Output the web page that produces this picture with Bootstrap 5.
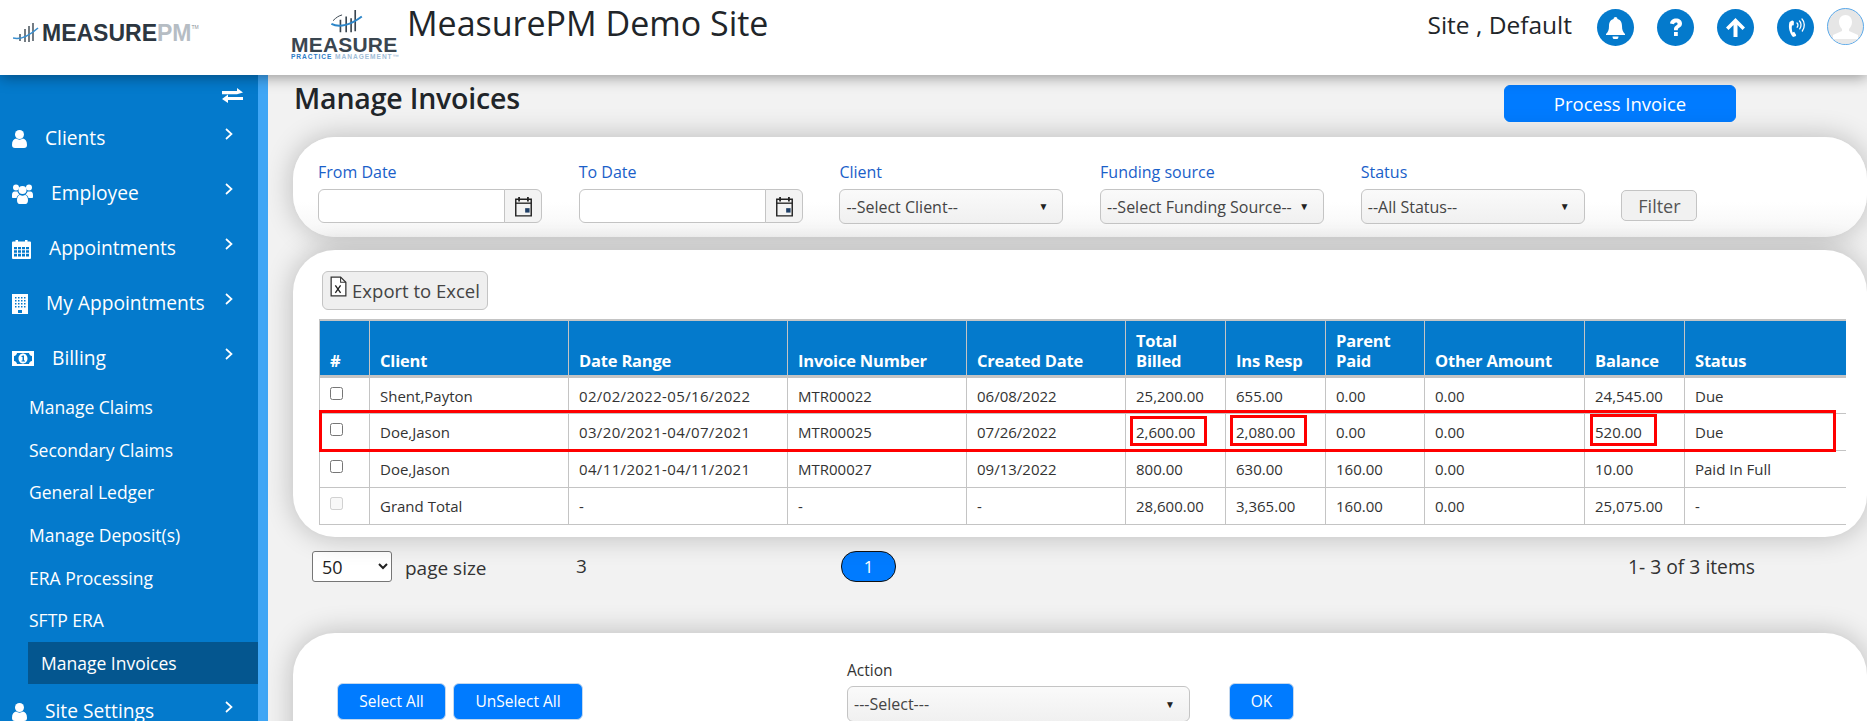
<!DOCTYPE html>
<html lang="en">
<head>
<meta charset="utf-8">
<title>Manage Invoices</title>
<link rel="stylesheet" href="https://cdn.jsdelivr.net/npm/bootstrap@5.3.0/dist/css/bootstrap.min.css">
<style>
html,body{height:721px;overflow:hidden}
body{font-family:"Open Sans","Noto Sans",sans-serif;font-size:15px;color:#212529;background:#f2f2f2}
.mp-top{height:75px;background:#fff;box-shadow:0 2px 14px rgba(0,0,0,.4);position:relative;z-index:5;flex:none}
.mp-logo1{width:268px;padding:23px 0 0 13px;flex:none;font-family:"Liberation Sans",sans-serif;font-weight:700;font-size:23px;line-height:20px;color:#2c3640}
.mp-logo1 svg{margin-right:3px}
.mp-logo1 i{font-style:normal;color:#b6bdc4}
.mp-logo1 sup{font-size:5px;color:#8a9199;top:-12px;font-weight:400}
.mp-logo2{width:139px;padding:0 0 0 23px;flex:none;font-family:"Liberation Sans",sans-serif;line-height:1}
.mp-logo2 svg{display:block;margin:10px 0 0 37px}
.mp-logo2 b{display:block;color:#3a4650;font-size:21px;letter-spacing:.2px;margin-top:4px;line-height:16px}
.mp-logo2 small{display:block;font-size:6.6px;letter-spacing:.95px;font-weight:700;color:#9fbdd8;white-space:nowrap;margin-top:1px}
.mp-logo2 small em{font-style:normal;color:#2d7cc7}
.mp-sitetitle{font-size:34px;font-weight:400;line-height:47px;margin:0}
.mp-user{font-size:24.5px;line-height:50px;margin-right:25px}
.mp-round{width:37px;height:37px;border-radius:50%;background:#047acc;margin-right:23px;margin-top:9px;flex:none}
.mp-avatar{width:37px;height:37px;border-radius:50%;background:#e6e6e6;border:1px solid #5aa9ea;margin:8px 3px 0 -10px;flex:none;overflow:hidden}
.mp-shell{flex:1 1 auto;min-height:0}
.mp-side{width:268px;flex:none;background:#047acc;border-right:10px solid #3fa6f5;color:#fff}
.mp-toggle{height:36px;padding:13px 15px 0 0}
.mp-item{height:55px;padding-left:12px;gap:18px;font-size:19.2px}
.mp-item .mp-chev{margin:0 25px 10px auto}
.mp-sub{height:42.6px;padding:0 0 0 29px;font-size:17.5px}
.mp-sub.mp-on{margin-left:28px;padding-left:13px;background:#04568f}
.mp-main{flex:1 1 auto;min-width:0}
.mp-head{height:62px;margin-left:26px;padding-right:131px}
.mp-h{font-size:28.5px;font-weight:600;margin:5px 0 0;line-height:36px;letter-spacing:-.2px}
.mp-process{width:232px;height:37px;margin-top:10px;font-size:18.5px;padding:0}
.btn-primary{background:#007bff;border-color:#007bff}
.mp-panel{margin-left:25px;background:#fff;border-radius:42px;box-shadow:0 0 28px rgba(0,0,0,.24);position:relative}
.mp-filter{height:100px;margin-bottom:13px;padding:25px 0 0 25px;gap:36.7px;background:linear-gradient(#fff 65%,#f5f5f5)}
.mp-fcol{width:224px;flex:none}
.mp-fcol label{display:block;color:#1a60c9;font-size:16px;line-height:20px;margin-bottom:7px;font-weight:500}
.mp-fcol .form-control{height:34px;border-color:#c4c4c4;border-radius:6px 0 0 6px;background:#fff;padding:0 8px}
.mp-fcol .input-group-text{width:38px;border-color:#c4c4c4;border-radius:0 6px 6px 0;background:#f3f3f3;padding:0 0 0 9px}
.mp-dd{height:35px;border:1px solid #c4c4c4;border-radius:6px;background:linear-gradient(#fafafa,#f0f0f0);padding:0 6px;font-size:16px;color:#444;white-space:nowrap}
.mp-dd span:last-child{font-size:10px;color:#222;padding-right:8px}
.mp-filterbtn{height:31px;width:76px;margin-top:28px;border:1px solid #c4c4c4;border-radius:5px;background:#f1f1f1;color:#555;font-size:18px;padding:0;flex:none;line-height:1}
.mp-tablewrap{height:287px;padding:21px 22px 0 26px}
.mp-export{height:39px;width:166px;margin:0 0 9px 3px;border:1px solid #c4c4c4;border-radius:6px;background:#efefef;color:#444;font-size:18.5px;padding:0;gap:5px}
.mp-export svg{margin-top:-8px}
.mp-table{table-layout:fixed;width:1526px;margin:0;border-color:#c4c4c4;font-size:15px}
.mp-c0{width:50px}.mp-c1{width:199px}.mp-c2{width:219px}.mp-c3{width:179px}.mp-c4{width:159px}.mp-c5{width:100px}.mp-c6{width:100px}.mp-c7{width:99px}.mp-c8{width:160px}.mp-c9{width:100px}.mp-c10{width:161px}
.mp-table th{background:#047acc;color:#fff;font-size:16.5px;font-weight:700;line-height:20px;height:56px;padding:0 10px 4px;vertical-align:bottom;border-top:2px solid #c4c4c4;border-bottom:3px solid #c4c4c4;letter-spacing:-.2px;--bs-table-bg:#047acc;--bs-table-color:#fff}
.mp-table td{height:37px;padding:8px 10px 0;vertical-align:top;line-height:20px;color:#333;white-space:nowrap}
.mp-table td:first-child{padding-top:9px}
.mp-table td:nth-child(3){letter-spacing:.35px}
.mp-table tr>*:last-child{border-right:0}
.mp-table input{display:block;margin:0;position:static}
.mp-pager{height:96px;padding:14px 112px 0 44px;font-size:19px;color:#333}
.mp-size{width:80px;height:31px;border:1px solid #767676;border-radius:3px;background:#fff;font-family:inherit;font-size:18px;padding:0 0 0 5px;color:#222}
.mp-ps{width:171px;margin-left:13px;line-height:34px}
.mp-n{width:265px;line-height:30px}
.mp-pill{width:55px;height:31px;border:1px solid #111;border-radius:15px;background:#007bff;color:#fff;line-height:30px;font-size:17px}
.mp-count{line-height:32px;font-size:19.3px}
.mp-bottom{height:200px;padding:28px 0 0 44px}
.mp-bottom .btn{height:37px;padding:0;font-size:15.5px;margin-top:22px;border-color:#c4d8ee}
.mp-w1{width:109px}.mp-w2{width:130px;margin-left:7px}.mp-w3{width:65px;margin-left:39px}
.mp-action{width:343px;margin-left:264px}
.mp-action label{display:block;font-size:15.5px;line-height:18px;margin-bottom:7px;color:#333}
.mp-action .mp-dd{height:36px}
.mp-mark{position:absolute;border:3px solid #f00;pointer-events:none}
.mp-m0{left:26px;top:160px;width:1517px;height:42px}
.mp-m1{left:837px;top:166px;width:77px;height:30px}
.mp-m2{left:937px;top:165px;width:77px;height:31px}
.mp-m3{left:1297px;top:164px;width:67px;height:32px}
</style>
</head>
<body class="d-flex flex-column">
<header class="mp-top d-flex">
  <div class="mp-logo1 d-flex align-items-start">
    <svg width="26" height="20" viewBox="0 0 26 20" fill="none"><g stroke="#3a4650" stroke-width="1.4"><path d="M7 11v7M12 6v13M16 3v16M20 0v18"/></g><path d="M0 15C8 17 16 13 25 5" stroke="#3a8fcf" stroke-width="1.6"/></svg>
    <span>MEASURE<i>PM</i><sup>TM</sup></span>
  </div>
  <div class="mp-logo2">
    <svg width="38" height="23" viewBox="0 0 38 28" fill="none"><g stroke="#3a4650" stroke-width="2"><path d="M11 12v15M18 8v19M24 10v17M29 0v26"/></g><path d="M0 17C10 22 24 18 37 8" stroke="#2d86c9" stroke-width="2.400"/><path d="M2 13C6 9 9 7 13 6" stroke="#3a4650" stroke-width="1.200"/></svg>
    <b>MEASURE</b>
    <small><em>PRACTICE</em> MANAGEMENT&trade;</small>
  </div>
  <h1 class="mp-sitetitle">MeasurePM Demo Site</h1>
  <div class="ms-auto d-flex align-items-start">
    <span class="mp-user">Site , Default</span>
    <span class="mp-round d-flex align-items-center justify-content-center"><svg width="21" height="23" viewBox="0 0 21 23" fill="#fff"><path d="M10.500 1a2 2 0 0 1 2 2c3.500 1 4.500 4 4.500 7 0 4 1 6 3 8v1H1v-1c2-2 3-4 3-8 0-3 1-6 4.500-7a2 2 0 0 1 2-2zM7.500 20.500h6a3 3 0 0 1-6 0z"/></svg></span>
    <span class="mp-round d-flex align-items-center justify-content-center"><svg width="14" height="19" viewBox="0 0 14 19" fill="#fff"><path d="M1 5.500C1.500 2 4 .5 7 .5c3.500 0 6 2 6 5 0 2.300-1.300 3.300-2.800 4.300C9 10.600 8.800 11 8.800 12.200H5v-1.100c0-1.800.8-2.800 2.200-3.700.9-.6 1.400-1 1.400-1.700 0-.8-.7-1.300-1.600-1.300-1.100 0-1.800.7-1.900 1.900zM5 14h3.800v4H5z"/></svg></span>
    <span class="mp-round d-flex align-items-center justify-content-center"><svg width="21" height="21" viewBox="0 0 21 21" fill="#fff"><path d="M10.500 1 20 10.500 17.500 13l-5-5v12h-4V8l-5 5L1 10.500z"/></svg></span>
    <span class="mp-round d-flex align-items-center justify-content-center"><svg width="24" height="24" viewBox="0 0 24 24" fill="none"><path d="M8 4.500 5.500 6C4 11 5.500 17 9 21l2.500-.8c.8-.4.8-1 .4-1.600l-1.700-2.800-1.700.6C7.800 14 7.500 11.500 8 9.500l1.700-.2.200-3.300c0-.9-.8-1.700-1.900-1.500z" fill="#fff"/><path d="M13 7c1.200 1 1.200 3 .2 4.200M15.500 5c2 1.800 2 5.500.2 7.800M18 3c3 3 3 8.500.3 12" stroke="#fff" stroke-width="1.300" stroke-linecap="round"/></svg></span>
    <span class="mp-avatar d-block"><svg width="35" height="35" viewBox="0 0 35 35"><path d="M17.500 6c4 0 6.500 3 6.500 7 0 3-1.500 5.500-3 7v2l9 4v5H5v-5l9-4v-2c-1.500-1.500-3-4-3-7 0-4 2.500-7 6.500-7z" fill="#fff"/><path d="M0 30h35v5H0z" fill="#e9e9e9"/></svg></span>
  </div>
</header>
<div class="mp-shell d-flex">
  <nav class="mp-side">
    <div class="mp-toggle d-flex justify-content-end"><svg width="21" height="15" viewBox="0 0 21 15" fill="#fff"><path d="M0 3h15V0l6 4.500L15 6.200H0zM21 9H6V6.500L0 11l6 4v-3h15z"/></svg></div>
    <div class="mp-item d-flex align-items-center"><svg width="15" height="18" viewBox="0 0 15 18" fill="#fff"><circle cx="7.500" cy="4.500" r="4.500"/><path d="M0 15c0-4 1.500-6 4-6.500 2 1.500 5 1.500 7 0 2.500.5 4 2.500 4 6.500 0 2-1 3-3 3H3c-2 0-3-1-3-3z"/></svg><span>Clients</span><svg class="mp-chev" width="8" height="12" viewBox="0 0 8 12" fill="none"><path d="M1 1l5.500 5L1 11" stroke="#fff" stroke-width="1.700"/></svg></div>
    <div class="mp-item d-flex align-items-center"><svg width="21" height="20" viewBox="0 0 21 20" fill="#fff"><circle cx="4" cy="3.500" r="3"/><circle cx="17" cy="3.500" r="3"/><circle cx="10.500" cy="6" r="4"/><path d="M0 11c0-2 1-3.500 2.500-3.500h3c.5 1.500 1 2 2 3-1.500.5-2.500 1.500-3 3.500H1c-.7 0-1-.5-1-1zM21 11c0-2-1-3.500-2.500-3.500h-3c-.5 1.500-1 2-2 3 1.500.5 2.500 1.500 3 3.500H20c.7 0 1-.5 1-1zM5 16c0-3 1.500-5 3-5 1.500 1 3.500 1 5 0 1.500 0 3 2 3 5 0 2.500-1 4-2.500 4h-6C6 20 5 18.500 5 16z"/></svg><span>Employee</span><svg class="mp-chev" width="8" height="12" viewBox="0 0 8 12" fill="none"><path d="M1 1l5.500 5L1 11" stroke="#fff" stroke-width="1.700"/></svg></div>
    <div class="mp-item d-flex align-items-center"><svg width="19" height="20" viewBox="0 0 19 20" fill="#fff"><path fill-rule="evenodd" d="M1 2.500h2.500V1h2.500v1.500h7V1h2.500v1.500H18a1 1 0 0 1 1 1V19a1 1 0 0 1-1 1H1a1 1 0 0 1-1-1V3.500a1 1 0 0 1 1-1zM2 8v2.300h3V8zm4 0v2.300h3V8zm4 0v2.300h3V8zm4 0v2.300h3V8zM2 11.300v2.500h3v-2.500zm4 0v2.500h3v-2.500zm4 0v2.500h3v-2.500zm4 0v2.500h3v-2.500zM2 14.800v2.700h3v-2.700zm4 0v2.700h3v-2.700zm4 0v2.700h3v-2.700zm4 0v2.700h3v-2.700z"/></svg><span>Appointments</span><svg class="mp-chev" width="8" height="12" viewBox="0 0 8 12" fill="none"><path d="M1 1l5.500 5L1 11" stroke="#fff" stroke-width="1.700"/></svg></div>
    <div class="mp-item d-flex align-items-center"><svg width="16" height="20" viewBox="0 0 16 20" fill="#fff"><path fill-rule="evenodd" d="M0 0h16v20H0zM3 3v1.500h1.500V3zm3 0v1.500h1.500V3zm3 0v1.500h1.500V3zm3 0v1.500h1.500V3zM3 6v1.500h1.500V6zm3 0v1.500h1.500V6zm3 0v1.500h1.500V6zm3 0v1.500h1.500V6zM3 9v1.500h1.500V9zm3 0v1.500h1.500V9zm3 0v1.500h1.500V9zm3 0v1.500h1.500V9zM3 12v1.500h1.500V12zm3 0v1.500h1.500V12zm3 0v1.500h1.500V12zm3 0v1.500h1.500V12zM6 16v3h4v-3z"/></svg><span>My Appointments</span><svg class="mp-chev" width="8" height="12" viewBox="0 0 8 12" fill="none"><path d="M1 1l5.500 5L1 11" stroke="#fff" stroke-width="1.700"/></svg></div>
    <div class="mp-item d-flex align-items-center"><svg width="22" height="15" viewBox="0 0 22 15" fill="#fff"><path fill-rule="evenodd" d="M0 0h22v15H0zM5 2c0 1.500-1.500 3-3 3v5c1.500 0 3 1.500 3 3h12c0-1.500 1.500-3 3-3V5c-1.500 0-3-1.500-3-3zm6 .5c2.500 0 4.500 2.200 4.500 5S13.500 12.500 11 12.500 6.500 10.300 6.500 7.500 8.500 2.500 11 2.500zM9.500 5v1h1v3.500h-1v1h3.500v-1h-1V4.500h-1z"/></svg><span>Billing</span><svg class="mp-chev" width="8" height="12" viewBox="0 0 8 12" fill="none"><path d="M1 1l5.500 5L1 11" stroke="#fff" stroke-width="1.700"/></svg></div>
    <div class="mp-sub d-flex align-items-center">Manage Claims</div>
    <div class="mp-sub d-flex align-items-center">Secondary Claims</div>
    <div class="mp-sub d-flex align-items-center">General Ledger</div>
    <div class="mp-sub d-flex align-items-center">Manage Deposit(s)</div>
    <div class="mp-sub d-flex align-items-center">ERA Processing</div>
    <div class="mp-sub d-flex align-items-center">SFTP ERA</div>
    <div class="mp-sub mp-on d-flex align-items-center">Manage Invoices</div>
    <div class="mp-item d-flex align-items-center"><svg width="15" height="18" viewBox="0 0 15 18" fill="#fff"><circle cx="7.500" cy="4.500" r="4.500"/><path d="M0 15c0-4 1.500-6 4-6.500 2 1.500 5 1.500 7 0 2.500.5 4 2.500 4 6.500 0 2-1 3-3 3H3c-2 0-3-1-3-3z"/></svg><span>Site Settings</span><svg class="mp-chev" width="8" height="12" viewBox="0 0 8 12" fill="none"><path d="M1 1l5.500 5L1 11" stroke="#fff" stroke-width="1.700"/></svg></div>
  </nav>
  <main class="mp-main">
    <div class="mp-head d-flex justify-content-between align-items-start">
      <h2 class="mp-h">Manage Invoices</h2>
      <button type="button" class="btn btn-primary mp-process">Process Invoice</button>
    </div>
    <section class="mp-panel mp-filter d-flex">
      <div class="mp-fcol"><label>From Date</label>
        <div class="input-group"><input class="form-control" type="text" aria-label="From Date"><span class="input-group-text"><svg width="19" height="21" viewBox="0 0 17 19" fill="none"><path d="M1.500 3h14v15h-14z" stroke="#222" stroke-width="1.300"/><path d="M1.500 6.500h14" stroke="#222" stroke-width="1.200"/><path d="M4.500 1v4M12.500 1v4" stroke="#222" stroke-width="1.600"/><path d="M10 11h4v4h-4z" fill="#1f3f66"/></svg></span></div></div>
      <div class="mp-fcol"><label>To Date</label>
        <div class="input-group"><input class="form-control" type="text" aria-label="To Date"><span class="input-group-text"><svg width="19" height="21" viewBox="0 0 17 19" fill="none"><path d="M1.500 3h14v15h-14z" stroke="#222" stroke-width="1.300"/><path d="M1.500 6.500h14" stroke="#222" stroke-width="1.200"/><path d="M4.500 1v4M12.500 1v4" stroke="#222" stroke-width="1.600"/><path d="M10 11h4v4h-4z" fill="#1f3f66"/></svg></span></div></div>
      <div class="mp-fcol"><label>Client</label><div class="mp-dd d-flex align-items-center justify-content-between"><span>--Select Client--</span><span>&#9660;</span></div></div>
      <div class="mp-fcol"><label>Funding source</label><div class="mp-dd d-flex align-items-center justify-content-between"><span>--Select Funding Source--</span><span>&#9660;</span></div></div>
      <div class="mp-fcol"><label>Status</label><div class="mp-dd d-flex align-items-center justify-content-between"><span>--All Status--</span><span>&#9660;</span></div></div>
      <button type="button" class="mp-filterbtn">Filter</button>
    </section>
    <section class="mp-panel mp-tablewrap">
      <button type="button" class="mp-export d-flex align-items-center justify-content-center"><svg width="17" height="21" viewBox="0 0 16 20" fill="none"><path d="M1 1h9l5 5v13H1z" stroke="#333" stroke-width="1.200" fill="#fff"/><path d="M10 1v5h5" stroke="#333"/><path d="M5 9l5 7M10 9l-5 7" stroke="#222" stroke-width="1.300"/></svg><span>Export to Excel</span></button>
      <table class="table table-bordered mp-table">
        <colgroup><col class="mp-c0"><col class="mp-c1"><col class="mp-c2"><col class="mp-c3"><col class="mp-c4"><col class="mp-c5"><col class="mp-c6"><col class="mp-c7"><col class="mp-c8"><col class="mp-c9"><col class="mp-c10"></colgroup>
        <thead><tr><th>#</th><th>Client</th><th>Date Range</th><th>Invoice Number</th><th>Created Date</th><th>Total<br>Billed</th><th>Ins Resp</th><th>Parent<br>Paid</th><th>Other Amount</th><th>Balance</th><th>Status</th></tr></thead>
        <tbody>
          <tr><td><input type="checkbox" aria-label="Select"></td><td>Shent,Payton</td><td>02/02/2022-05/16/2022</td><td>MTR00022</td><td>06/08/2022</td><td>25,200.00</td><td>655.00</td><td>0.00</td><td>0.00</td><td>24,545.00</td><td>Due</td></tr>
          <tr><td><input type="checkbox" aria-label="Select"></td><td>Doe,Jason</td><td>03/20/2021-04/07/2021</td><td>MTR00025</td><td>07/26/2022</td><td>2,600.00</td><td>2,080.00</td><td>0.00</td><td>0.00</td><td>520.00</td><td>Due</td></tr>
          <tr><td><input type="checkbox" aria-label="Select"></td><td>Doe,Jason</td><td>04/11/2021-04/11/2021</td><td>MTR00027</td><td>09/13/2022</td><td>800.00</td><td>630.00</td><td>160.00</td><td>0.00</td><td>10.00</td><td>Paid In Full</td></tr>
          <tr><td><input type="checkbox" disabled aria-label="Select"></td><td>Grand Total</td><td>-</td><td>-</td><td>-</td><td>28,600.00</td><td>3,365.00</td><td>160.00</td><td>0.00</td><td>25,075.00</td><td>-</td></tr>
        </tbody>
      </table>
      <div class="mp-mark mp-m0"></div><div class="mp-mark mp-m1"></div><div class="mp-mark mp-m2"></div><div class="mp-mark mp-m3"></div>
    </section>
    <div class="mp-pager d-flex align-items-start">
      <select class="mp-size" aria-label="page size"><option>50</option></select>
      <span class="mp-ps">page size</span>
      <span class="mp-n">3</span>
      <span class="mp-pill text-center">1</span>
      <span class="mp-count ms-auto">1- 3 of 3 items</span>
    </div>
    <section class="mp-panel mp-bottom d-flex align-items-start">
      <button type="button" class="btn btn-primary mp-w1">Select All</button>
      <button type="button" class="btn btn-primary mp-w2">UnSelect All</button>
      <div class="mp-action"><label>Action</label><div class="mp-dd d-flex align-items-center justify-content-between"><span>---Select---</span><span>&#9660;</span></div></div>
      <button type="button" class="btn btn-primary mp-w3">OK</button>
    </section>
  </main>
</div>
</body>
</html>
